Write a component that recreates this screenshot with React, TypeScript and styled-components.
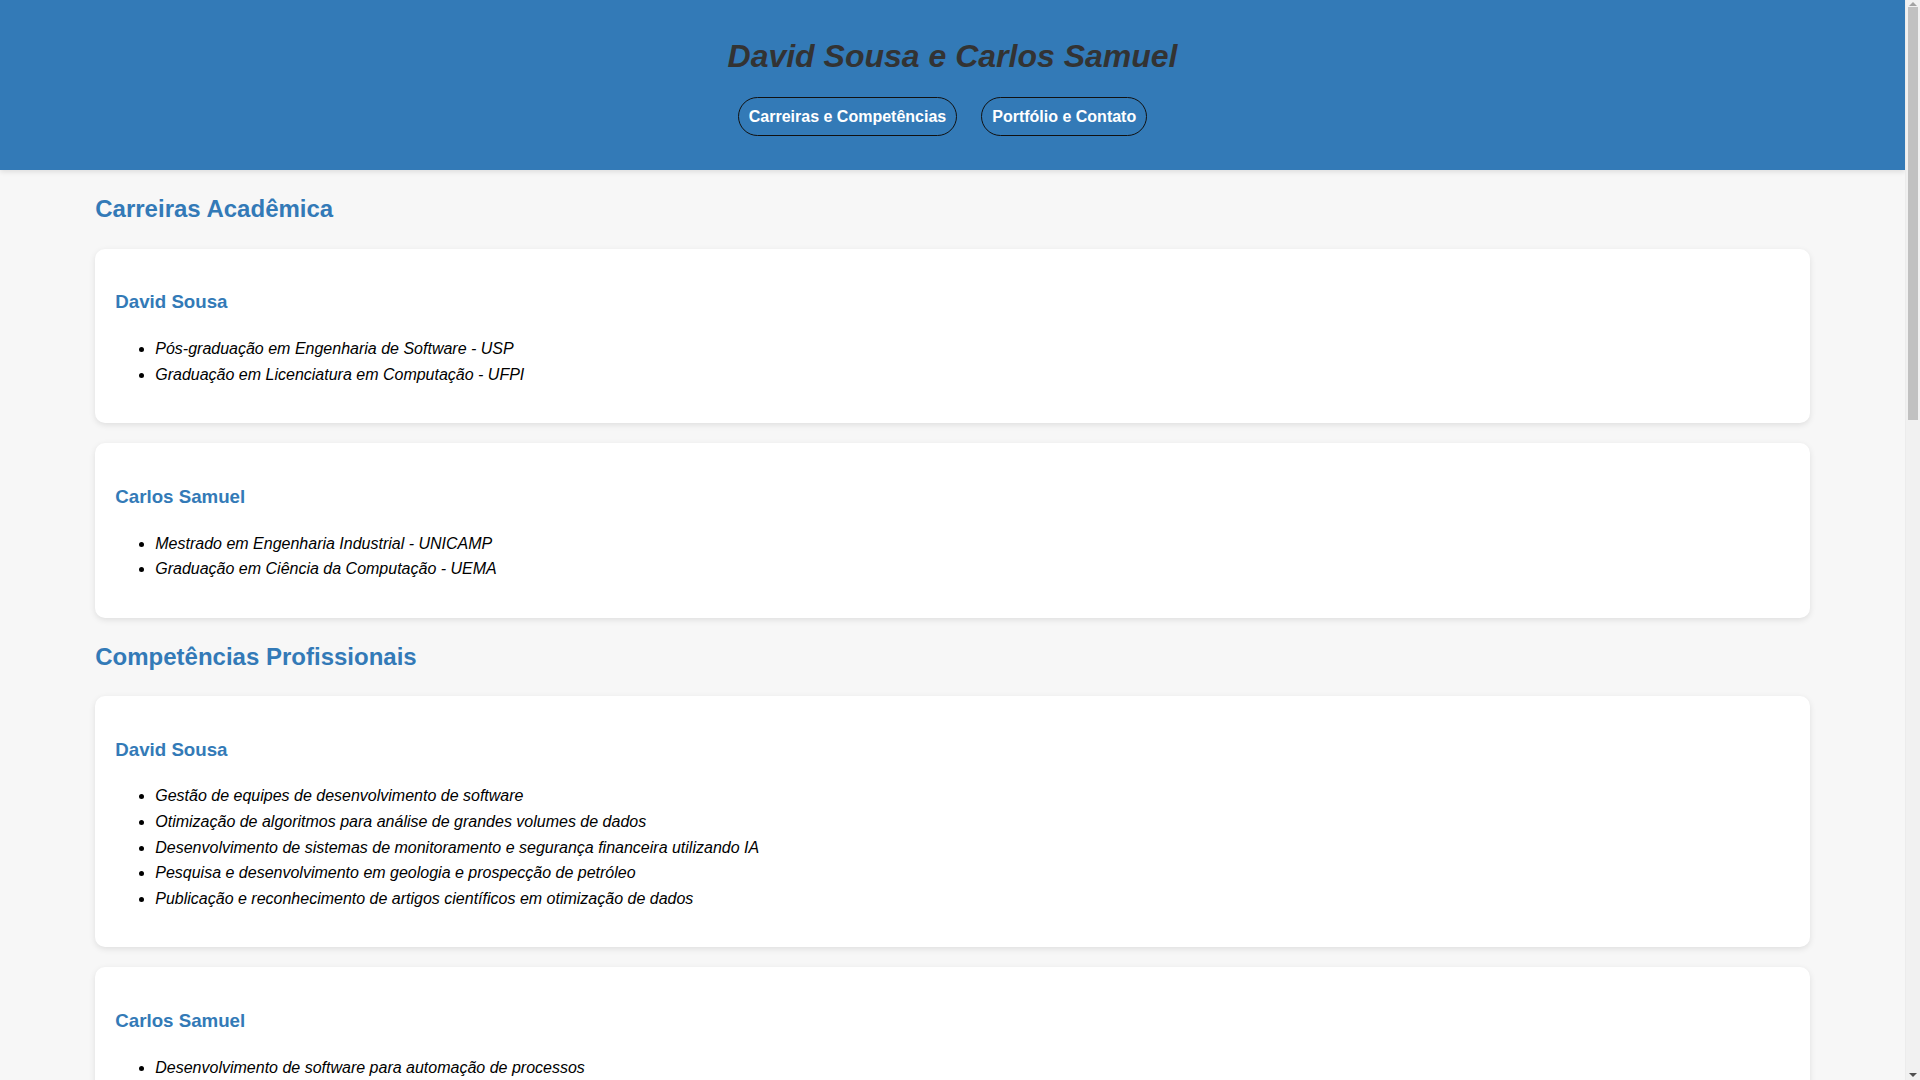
import React from "react";
import styled, { createGlobalStyle } from "styled-components";

const BLUE = "#337ab7";

const GlobalStyle = createGlobalStyle`
  html, body {
    margin: 0;
    padding: 0;
  }
  body {
    font-family: "Liberation Sans", Arial, Helvetica, sans-serif;
    line-height: 1.6;
    background: #f7f7f7;
    color: #000;
  }
`;

const Page = styled.div`
  margin-right: 15px;
`;

const Header = styled.header`
  background: ${BLUE};
  text-align: center;
  padding: 37px 0 34px;
  box-shadow: 0 2px 5px rgba(0, 0, 0, 0.1);
`;

const Title = styled.h1`
  margin: 0;
  font-size: 32px;
  line-height: 38.4px;
  font-style: italic;
  font-weight: bold;
  color: #333;
`;

const Nav = styled.nav`
  display: flex;
  justify-content: center;
  gap: 24px;
  padding-right: 20px;
  margin-top: 22px;
`;

const NavButton = styled.a`
  display: inline-block;
  padding: 9px 10px;
  line-height: 19px;
  font-size: 16px;
  font-weight: bold;
  color: #fff;
  text-decoration: none;
  border: 1px solid #111;
  border-radius: 20px;
`;

const Main = styled.main`
  padding: 0 5%;
`;

const Section = styled.section``;

const SectionTitle = styled.h2`
  margin: 19.92px 0;
  font-size: 24px;
  line-height: 38.4px;
  font-weight: bold;
  color: ${BLUE};
`;

const Card = styled.div`
  background: #fff;
  border-radius: 10px;
  padding: 20px;
  margin-bottom: 20px;
  box-shadow: 0 2px 6px rgba(0, 0, 0, 0.1);
`;

const PersonName = styled.h3`
  margin: 18.72px 0;
  font-size: 18.72px;
  line-height: 1.6;
  font-weight: bold;
  color: ${BLUE};
`;

const List = styled.ul`
  margin: 16px 0;
  padding-left: 40px;
`;

const Item = styled.li`
  font-style: italic;
  font-size: 16px;
  line-height: 25.6px;
`;

const Footer = styled.footer`
  background: ${BLUE};
  color: #fff;
  text-align: center;
  padding: 20px 0;
  font-size: 14px;
`;

/* Fake browser scrollbar that lies over the right edge of the viewport */
const ScrollBar = styled.div`
  position: fixed;
  top: 0;
  right: 0;
  width: 15px;
  height: 100vh;
  background: #f1f1f1;
  border-left: 1px solid #ececec;
  box-sizing: border-box;
`;

const ScrollThumb = styled.div`
  position: absolute;
  top: 7px;
  left: 2px;
  width: 10px;
  height: 413px;
  background: #c1c1c1;
`;

const Arrow = styled.div<{ $down?: boolean }>`
  position: absolute;
  left: 3px;
  width: 0;
  height: 0;
  border-left: 4px solid transparent;
  border-right: 4px solid transparent;
  ${(p) =>
    p.$down
      ? `bottom: 3px; border-top: 4px solid #505050;`
      : `top: 2px; border-bottom: 4px solid #a3a3a3;`}
`;

type Person = { name: string; items: string[] };
type SectionData = { title: string; people: Person[] };

const sections: SectionData[] = [
  {
    title: "Carreiras Acadêmica",
    people: [
      {
        name: "David Sousa",
        items: [
          "Pós-graduação em Engenharia de Software - USP",
          "Graduação em Licenciatura em Computação - UFPI",
        ],
      },
      {
        name: "Carlos Samuel",
        items: [
          "Mestrado em Engenharia Industrial - UNICAMP",
          "Graduação em Ciência da Computação - UEMA",
        ],
      },
    ],
  },
  {
    title: "Competências Profissionais",
    people: [
      {
        name: "David Sousa",
        items: [
          "Gestão de equipes de desenvolvimento de software",
          "Otimização de algoritmos para análise de grandes volumes de dados",
          "Desenvolvimento de sistemas de monitoramento e segurança financeira utilizando IA",
          "Pesquisa e desenvolvimento em geologia e prospecção de petróleo",
          "Publicação e reconhecimento de artigos científicos em otimização de dados",
        ],
      },
      {
        name: "Carlos Samuel",
        items: [
          "Desenvolvimento de software para automação de processos",
          "Gerenciamento de projetos industriais",
          "Análise e modelagem de dados para tomada de decisão",
          "Integração de sistemas e otimização de processos produtivos",
          "Ensino e orientação em computação",
        ],
      },
    ],
  },
  {
    title: "Experiência Profissional",
    people: [
      {
        name: "David Sousa",
        items: [
          "Engenheiro de Software Sênior - Empresa de Tecnologia Financeira",
          "Líder técnico de equipes de desenvolvimento ágil",
          "Analista de sistemas em projetos de grande porte",
          "Consultor em arquitetura de software e computação em nuvem",
          "Desenvolvedor de soluções de inteligência artificial",
          "Professor de disciplinas de programação e engenharia de software",
          "Pesquisador em otimização de algoritmos",
        ],
      },
      {
        name: "Carlos Samuel",
        items: [
          "Engenheiro de Processos - Indústria de Petróleo e Gás",
          "Coordenador de projetos de automação industrial",
          "Desenvolvedor de sistemas de controle e supervisão",
          "Analista de dados em operações industriais",
          "Consultor em melhoria contínua e Lean Manufacturing",
          "Professor de Ciência da Computação",
        ],
      },
    ],
  },
  {
    title: "Projetos e Pesquisas",
    people: [
      {
        name: "David Sousa",
        items: [
          "Plataforma de detecção de fraudes financeiras com aprendizado de máquina",
          "Sistema de análise de dados geológicos para prospecção de petróleo",
          "Ferramenta de otimização de consultas em bancos de dados",
          "Aplicativo de gestão de projetos para equipes ágeis",
          "Artigos publicados em conferências nacionais e internacionais",
        ],
      },
      {
        name: "Carlos Samuel",
        items: [
          "Sistema supervisório para controle de linhas de produção",
          "Automação de relatórios industriais com Python",
          "Modelagem de processos para redução de custos operacionais",
          "Painéis de indicadores de desempenho em tempo real",
          "Integração de sensores IoT em ambientes industriais",
          "Orientação de trabalhos de conclusão de curso",
        ],
      },
    ],
  },
];

export default function App() {
  return (
    <>
      <GlobalStyle />
      <Page>
        <Header>
          <Title>David Sousa e Carlos Samuel</Title>
          <Nav>
            <NavButton href="#carreiras">Carreiras e Competências</NavButton>
            <NavButton href="#portfolio">Portfólio e Contato</NavButton>
          </Nav>
        </Header>
        <Main>
          {sections.map((s) => (
            <Section key={s.title}>
              <SectionTitle>{s.title}</SectionTitle>
              {s.people.map((p) => (
                <Card key={p.name}>
                  <PersonName>{p.name}</PersonName>
                  <List>
                    {p.items.map((it) => (
                      <Item key={it}>{it}</Item>
                    ))}
                  </List>
                </Card>
              ))}
            </Section>
          ))}
        </Main>
        <Footer>© 2024 David Sousa e Carlos Samuel. Todos os direitos reservados.</Footer>
      </Page>
      <ScrollBar aria-hidden="true">
        <Arrow />
        <ScrollThumb />
        <Arrow $down />
      </ScrollBar>
    </>
  );
}
